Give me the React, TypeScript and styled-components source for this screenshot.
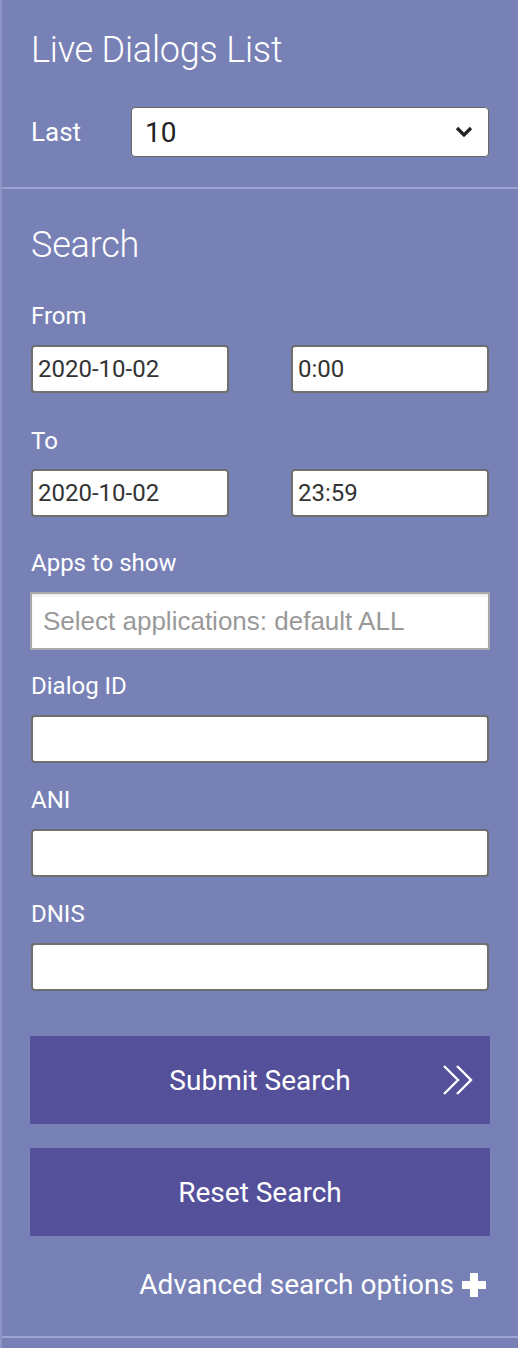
import React from 'react';
import styled, { createGlobalStyle } from 'styled-components';

const GlobalStyle = createGlobalStyle`
  html, body {
    margin: 0;
    padding: 0;
    background: #7781b6;
  }
  * {
    box-sizing: border-box;
  }
`;

const Sidebar = styled.aside`
  width: 518px;
  min-height: 1348px;
  background: #7781b6;
  border-left: 2px solid #8d96c6;
  font-family: Roboto, 'Liberation Sans', sans-serif;
  color: #fff;
`;

const Section = styled.section<{ $pad: string }>`
  padding: ${({ $pad }) => $pad};
  border-bottom: 2px solid #9ca4d2;
`;

const Title = styled.h2`
  margin: 0;
  font-size: 36px;
  font-weight: 300;
  line-height: 42px;
  letter-spacing: -0.2px;
`;

const LastRow = styled.div`
  display: flex;
  align-items: center;
  margin-top: 36px;

  label {
    width: 100px;
    font-size: 26px;
    font-weight: 400;
  }
`;

const Select = styled.div`
  flex: 1;
  height: 50px;
  display: flex;
  align-items: center;
  justify-content: space-between;
  padding: 0 14px 0 13px;
  background: #fff;
  border: 1px solid #666;
  border-radius: 4px;
  color: #222;
  font-size: 28px;
`;

const FieldLabel = styled.div<{ $m: string }>`
  font-size: 24px;
  font-weight: 400;
  line-height: 28px;
  margin: ${({ $m }) => $m};
`;

const Row = styled.div`
  display: flex;
  justify-content: space-between;
`;

const Input = styled.div<{ $w?: string }>`
  width: ${({ $w }) => $w || '100%'};
  height: 48px;
  display: flex;
  align-items: center;
  padding: 0 5px;
  background: #fff;
  border: 2px solid #6f6f6f;
  border-radius: 4px;
  color: #333;
  font-size: 24px;
`;

const AppsInput = styled.div`
  height: 58px;
  display: flex;
  align-items: center;
  padding: 0 11px;
  margin: 0 -1px;
  background: #fff;
  border: 2px solid #a9a9a9;
  box-shadow: inset 0 3px 4px -2px rgba(0, 0, 0, 0.12);
  color: #999;
  font-family: 'Liberation Sans', Arial, sans-serif;
  font-size: 26px;
  white-space: nowrap;
`;

const Button = styled.button<{ $mt: number }>`
  position: relative;
  display: flex;
  width: calc(100% + 2px);
  margin: ${({ $mt }) => $mt}px 0 0 -1px;
  height: 88px;
  align-items: center;
  justify-content: center;
  border: none;
  background: #54509a;
  color: #fff;
  font-family: Roboto, 'Liberation Sans', sans-serif;
  font-size: 28px;
  font-weight: 400;
  cursor: pointer;

  svg {
    position: absolute;
    right: 15px;
    top: 50%;
    transform: translateY(-50%);
  }
`;

const Advanced = styled.div`
  display: flex;
  justify-content: flex-end;
  align-items: center;
  gap: 7px;
  margin: 33px 2px 0 0;
  font-size: 28px;
  line-height: 32px;
`;

export default function App() {
  return (
    <Sidebar>
      <GlobalStyle />
      <Section $pad="29px 29px 30px 29px">
        <Title>Live Dialogs List</Title>
        <LastRow>
          <label>Last</label>
          <Select>
            <span>10</span>
            <svg width="20" height="14" viewBox="0 0 20 14">
              <path d="M3 3l7 7 7-7" fill="none" stroke="#222" strokeWidth="3.2" />
            </svg>
          </Select>
        </LastRow>
      </Section>
      <Section $pad="35px 29px 35px 29px">
        <Title as="h3">Search</Title>
        <FieldLabel $m="36px 0 15px">From</FieldLabel>
        <Row>
          <Input $w="198px">2020-10-02</Input>
          <Input $w="198px">0:00</Input>
        </Row>
        <FieldLabel $m="34px 0 14px">To</FieldLabel>
        <Row>
          <Input $w="198px">2020-10-02</Input>
          <Input $w="198px">23:59</Input>
        </Row>
        <FieldLabel $m="32px 0 15px">Apps to show</FieldLabel>
        <AppsInput>Select applications: default ALL</AppsInput>
        <FieldLabel $m="22px 0 15px">Dialog ID</FieldLabel>
        <Input />
        <FieldLabel $m="23px 0 15px">ANI</FieldLabel>
        <Input />
        <FieldLabel $m="23px 0 15px">DNIS</FieldLabel>
        <Input />
        <Button $mt={45}>
          Submit Search
          <svg width="34" height="31" viewBox="0 0 34 31">
            <path d="M3 1.5l14 14-14 14M16 1.5l14 14-14 14" fill="none" stroke="#fff" strokeWidth="2.4" />
          </svg>
        </Button>
        <Button $mt={24}>Reset Search</Button>
        <Advanced>
          Advanced search options
          <svg width="26" height="26" viewBox="0 0 26 26">
            <path d="M13 1v24M1 13h24" stroke="#fff" strokeWidth="8" />
          </svg>
        </Advanced>
      </Section>
    </Sidebar>
  );
}
